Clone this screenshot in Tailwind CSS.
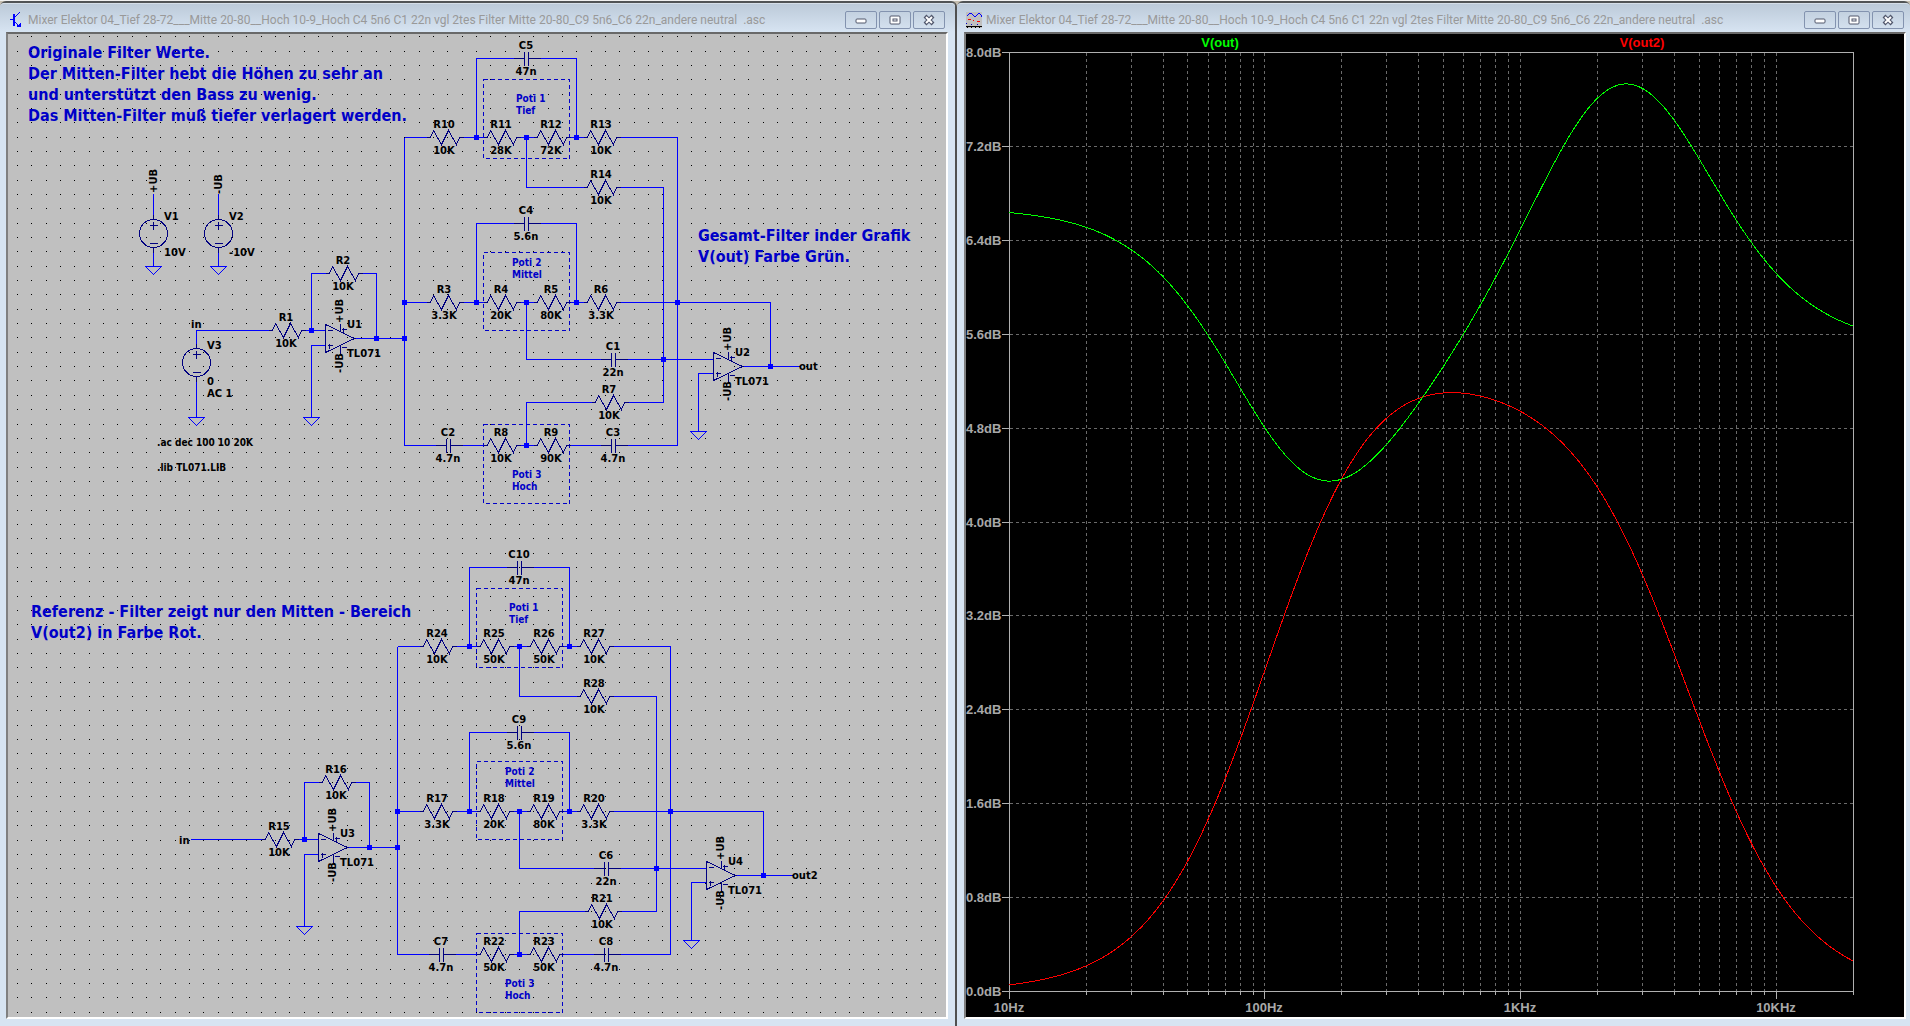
<!DOCTYPE html>
<html lang="de">
<head>
<meta charset="utf-8">
<title>Mixer Elektor 04</title>
<script src="https://cdn.jsdelivr.net/npm/@tailwindcss/browser@4"></script>
</head>
<body class="h-screen overflow-hidden bg-[#f0f0f0] pt-px">
<svg class="hidden">
  <defs>
    <g id="btn-min"><rect x="10" y="7" width="10" height="4" rx="1" fill="#fff" stroke="#50566b"/></g>
    <g id="btn-max"><rect x="10" y="4" width="10" height="8" rx="1" fill="#fff" stroke="#50566b"/><rect x="13" y="7" width="4" height="2" fill="#fff" stroke="#50566b"/></g>
    <g id="btn-close"><path d="M11 4l8 8M19 4l-8 8" stroke="#50566b" stroke-width="4"/><path d="M12 5l6 6M18 5l-6 6" stroke="#fff" stroke-width="2"/></g>
  </defs>
</svg>
<main class="grid h-full grid-cols-[957fr_953fr] bg-[#c5beb0]">

  <section class="flex min-w-0 flex-col rounded-t-md border-t-2 border-r-2 border-t-[#505355] border-r-[#505050] bg-[#d7e4f2] pr-[7px] pb-[7px] pl-[6px]">
    <header class="-mr-[7px] -ml-[6px] flex h-[29px] shrink-0 items-center rounded-t-sm border-t border-[#d5dee8] bg-linear-to-b from-[#bccad9] to-[#d7e4f2] pt-[3px] pr-[10px] pl-2">
      <svg class="size-4 shrink-0" viewBox="0 0 16 16" fill="none" stroke="#0000ff" shape-rendering="crispEdges"><path d="M2 7.500h4M11.500 0.500L6.500 5.500M6.500 9.500l5 5.500"/><path d="M6 2v12" stroke-width="2"/><path d="M8 15h5v-4z" fill="#0000ff" stroke="none"/></svg>
      <h1 class="ml-1 min-w-0 flex-1 truncate pt-px font-['Roboto',sans-serif] text-[12px] leading-4 whitespace-pre text-[#999999]">Mixer Elektor 04_Tief 28-72___Mitte 20-80__Hoch 10-9_Hoch C4 5n6 C1 22n vgl 2tes Filter Mitte 20-80_C9 5n6_C6 22n_andere neutral  .asc</h1>
      <div class="flex gap-[2px]">
        <button aria-label="Minimieren" class="h-[18px] w-8 rounded-[2px] border border-[#8393af] bg-linear-to-b from-[#c3d1e0] to-[#d3e0ee]"><svg class="block h-4 w-[30px]" viewBox="0 0 30 16"><use href="#btn-min"/></svg></button>
        <button aria-label="Maximieren" class="h-[18px] w-8 rounded-[2px] border border-[#8393af] bg-linear-to-b from-[#c3d1e0] to-[#d3e0ee]"><svg class="block h-4 w-[30px]" viewBox="0 0 30 16"><use href="#btn-max"/></svg></button>
        <button aria-label="Schließen" class="h-[18px] w-8 rounded-[2px] border border-[#8393af] bg-linear-to-b from-[#c3d1e0] to-[#d3e0ee]"><svg class="block h-4 w-[30px]" viewBox="0 0 30 16"><use href="#btn-close"/></svg></button>
      </div>
    </header>
    <div class="min-h-0 flex-1 border-2 border-t-[#696969] border-r-white border-b-white border-l-[#808080] bg-[#c0c0c0]">
      <svg id="schematic" class="block h-full w-full font-['DejaVu_Sans',sans-serif] text-[10px] font-bold" viewBox="8 34 938 983" preserveAspectRatio="xMinYMin" role="img" aria-label="Schaltplan">
        <path id="dots" stroke="#000" fill="none" shape-rendering="crispEdges"/>
        <g class="font-['DejaVu_Sans_Condensed','DejaVu_Sans',sans-serif] text-[16px]" fill="#0000c8">
          <text x="28" y="58">Originale Filter Werte.</text>
          <text x="28" y="79">Der Mitten-Filter hebt die Höhen zu sehr an</text>
          <text x="28" y="100">und unterstützt den Bass zu wenig.</text>
          <text x="28" y="121">Das Mitten-Filter muß tiefer verlagert werden.</text>
          <text x="698" y="241">Gesamt-Filter inder Grafik</text>
          <text x="698" y="262">V(out) Farbe Grün.</text>
          <text x="31" y="617">Referenz - Filter zeigt nur den Mitten - Bereich</text>
          <text x="31" y="638">V(out2) in Farbe Rot.</text>
        </g>
        <g class="font-['DejaVu_Sans_Condensed','DejaVu_Sans',sans-serif]" fill="#000">
          <text x="157" y="446">.ac dec 100 10 20K</text>
          <text x="157" y="471">.lib TL071.LIB</text>
        </g>
        <g id="sources"></g>
        <g id="filterA"></g>
        <g id="filterB" transform="translate(-7 509)"></g>
      </svg>
    </div>
  </section>

  <section class="flex min-w-0 flex-col rounded-t-md border-t-2 border-t-[#505355] bg-[#d7e4f2] pr-1 pb-[7px] pl-[7px]">
    <header class="-mr-1 -ml-[7px] flex h-[29px] shrink-0 items-center rounded-t-sm border-t border-[#d5dee8] bg-linear-to-b from-[#bccad9] to-[#d7e4f2] pt-[3px] pr-[6px] pl-[9px]">
      <svg class="size-4 shrink-0" viewBox="0 0 16 16" fill="none" shape-rendering="crispEdges"><path d="M0 0h16v16H0z" fill="#c0c0c0"/><path d="M0.500 4.500L3.500 1.500h2L9 5l3.500-3.500h1L16 4.500" stroke="#0000ff"/><path d="M2 7.500h3M7 8.500h1M11 9.500h3" stroke="#ff0000"/><path d="M5 12.500h1M11 12.500h1M0 11.500h1" stroke="#0000c8"/><path d="M0 14.500h16M1 15.500h1M5 15.500h1M9 15.500h1M13 15.500h1" stroke="#000"/></svg>
      <h1 class="ml-1 min-w-0 flex-1 truncate pt-px font-['Roboto',sans-serif] text-[12px] leading-4 whitespace-pre text-[#999999]">Mixer Elektor 04_Tief 28-72___Mitte 20-80__Hoch 10-9_Hoch C4 5n6 C1 22n vgl 2tes Filter Mitte 20-80_C9 5n6_C6 22n_andere neutral  .asc</h1>
      <div class="flex gap-[2px]">
        <button aria-label="Minimieren" class="h-[18px] w-8 rounded-[2px] border border-[#8393af] bg-linear-to-b from-[#c3d1e0] to-[#d3e0ee]"><svg class="block h-4 w-[30px]" viewBox="0 0 30 16"><use href="#btn-min"/></svg></button>
        <button aria-label="Maximieren" class="h-[18px] w-8 rounded-[2px] border border-[#8393af] bg-linear-to-b from-[#c3d1e0] to-[#d3e0ee]"><svg class="block h-4 w-[30px]" viewBox="0 0 30 16"><use href="#btn-max"/></svg></button>
        <button aria-label="Schließen" class="h-[18px] w-8 rounded-[2px] border border-[#8393af] bg-linear-to-b from-[#c3d1e0] to-[#d3e0ee]"><svg class="block h-4 w-[30px]" viewBox="0 0 30 16"><use href="#btn-close"/></svg></button>
      </div>
    </header>
    <div class="min-h-0 flex-1 border-2 border-t-[#696969] border-r-white border-b-white border-l-[#808080] bg-black">
      <svg id="plot" class="block h-full w-full font-['Liberation_Sans',sans-serif] text-[13px] font-bold" viewBox="966 34 938 983" preserveAspectRatio="xMinYMin" role="img" aria-label="Frequenzgang"></svg>
    </div>
  </section>
</main>

<script>
const $ = id => document.getElementById(id);
const WIRE = '#0000ff', PART = '#000080', NOTE = '#0000c8';

// Editor grid
let dots = '';
for (let r = 0; r < 69; r++)
  for (let c = 0; c < 65; c++)
    dots += `M${Math.floor(17.4 + 14.345 * c)} ${Math.floor(36.7 + 14.345 * r) + 0.5}h1`;
$('dots').setAttribute('d', dots);

// Schematic primitives
const stroke = (d, col = WIRE, extra = '') =>
  `<path d="${d}" transform="translate(.5 .5)" fill="none" stroke="${col}" shape-rendering="crispEdges" ${extra}/>`;
const text = (x, y, s, attr = '') => `<text x="${x}" y="${y}" ${attr}>${s}</text>`;
const mid = 'text-anchor="middle"';
const up = (x, y, s, anchor) => `<text transform="translate(${x} ${y}) rotate(-90)" text-anchor="${anchor}">${s}</text>`;
const res = (x, y, n, v) =>
  stroke(`M${x - 4} ${y}h4l3 -7l8 14l7 -14l8 14l3 -7h4`, PART) + text(x + 14, y - 9, n, mid) + text(x + 14, y + 17, v, mid);
const cap = (x, y, n, v) =>
  stroke(`M${x - 13} ${y}h11M${x - 2} ${y - 7}v14M${x + 2} ${y - 7}v14M${x + 2} ${y}h12`, PART) +
  text(x, y - 9, n, mid) + text(x, y + 17, v, mid);
const gnd = (x, y) => stroke(`M${x - 8} ${y}h16l-8 8z`);
const dot = (x, y) => `<rect x="${x - 2}" y="${y - 2}" width="5" height="5" fill="${WIRE}"/>`;
const source = (x, y, n, v, v2 = '') =>
  stroke(`M${x} ${y - 19}v5M${x} ${y + 14}v5M${x - 14} ${y}a14 14 0 1 0 28 0a14 14 0 1 0 -28 0M${x - 4} ${y - 8}h8M${x} ${y - 12}v8M${x - 4} ${y + 10}h8`, PART) +
  text(x + 11, y - 13, n) + text(x + 11, y + 23, v) + text(x + 11, y + 35, v2);
const opamp = (x, y, n) =>
  stroke(`M${x} ${y - 14}v28l29 -14zM${x + 2} ${y - 8}h5M${x + 2} ${y + 7}h5M${x + 4} ${y + 5}v5M${x + 15} ${y - 15}v8M${x + 15} ${y + 7}v8M${x + 16} ${y - 9}h5M${x + 18} ${y - 11}v5M${x + 16} ${y + 9}h5`, PART) +
  text(x + 22, y - 10, n) + text(x + 22, y + 19, 'TL071') +
  up(x + 18, y - 15, '+UB', 'start') + up(x + 18, y + 15, '-UB', 'end');
const box = (y, h) => stroke(`M483 ${y}h86v${h}h-86z`, NOTE, 'stroke-dasharray="4 3"');
const note = (x, y, a, b) =>
  `<g class="font-['DejaVu_Sans_Condensed','DejaVu_Sans',sans-serif]" fill="${NOTE}">${text(x, y, a)}${text(x, y + 12, b)}</g>`;

$('sources').innerHTML =
  stroke('M153 193V219M153 247V266M218 193V219M218 247V266M196 348V330H272M196 376V417') +
  gnd(153, 266) + gnd(218, 266) + gnd(196, 417) +
  source(153, 233, 'V1', '10V') + source(218, 233, 'V2', '-10V') + source(196, 362, 'V3', '0', 'AC 1') +
  up(157, 193, '+UB', 'start') + up(222, 194, '-UB', 'start') +
  text(191, 328, 'in') +
  stroke('M190 839H265') + text(179, 844, 'in');

// One Baxandall stage; n holds the part names, p the pot halves of the low and high bands
function stage(n, p, out) {
  return stroke(
      'M301 330H325M311 330V273H329M358 273H376V338M354 338H404M325 345H311V417' +
      'M404 137V445M404 137H430M459 137H487M516 137H537M566 137H587M616 137H677V445' +
      'M476 137V58H524M528 58H576V137M526 137V187H587M616 187H663V402' +
      'M404 302H430M459 302H487M516 302H537M566 302H587M616 302H770V366' +
      'M476 302V223H524M528 223H576V302M526 302V359H611M615 359H713' +
      'M526 445V402H595M624 402H663M404 445H446M450 445H487M516 445H537M566 445H611M615 445H677' +
      'M713 373H698V431M742 366H799') +
    box(79, 79) + box(252, 78) + box(424, 79) +
    note(516, 102, 'Poti 1', 'Tief') + note(512, 266, 'Poti 2', 'Mittel') + note(512, 478, 'Poti 3', 'Hoch') +
    gnd(311, 417) + gnd(698, 431) +
    res(272, 330, n[0], '10K') + res(329, 273, n[1], '10K') +
    res(430, 137, n[2], '10K') + res(487, 137, n[3], p[0]) + res(537, 137, n[4], p[1]) + res(587, 137, n[5], '10K') +
    res(587, 187, n[6], '10K') +
    res(430, 302, n[7], '3.3K') + res(487, 302, n[8], '20K') + res(537, 302, n[9], '80K') + res(587, 302, n[10], '3.3K') +
    res(595, 402, n[11], '10K') + res(487, 445, n[12], p[2]) + res(537, 445, n[13], p[3]) +
    cap(526, 58, n[14], '47n') + cap(526, 223, n[15], '5.6n') + cap(613, 359, n[16], '22n') +
    cap(448, 445, n[17], '4.7n') + cap(613, 445, n[18], '4.7n') +
    opamp(325, 338, n[19]) + opamp(713, 366, n[20]) + text(799, 370, out) +
    [[311,330],[376,338],[404,338],[404,302],[476,137],[526,137],[576,137],[476,302],[526,302],[576,302],
     [677,302],[663,359],[526,445],[770,366]].map(q => dot(...q)).join('');
}
$('filterA').innerHTML = stage(
  ['R1','R2','R10','R11','R12','R13','R14','R3','R4','R5','R6','R7','R8','R9','C5','C4','C1','C2','C3','U1','U2'],
  ['28K','72K','10K','90K'], 'out');
$('filterB').innerHTML = stage(
  ['R15','R16','R24','R25','R26','R27','R28','R17','R18','R19','R20','R21','R22','R23','C10','C9','C6','C7','C8','U3','U4'],
  ['50K','50K','50K','50K'], 'out2');

// Small-signal response, complex numbers as [re, im]
const add = (...v) => v.reduce((a, b) => [a[0] + b[0], a[1] + b[1]]);
const mul = (a, b) => [a[0] * b[0] - a[1] * b[1], a[0] * b[1] + a[1] * b[0]];
const neg = a => [-a[0], -a[1]];
const inv = a => { const m = a[0] ** 2 + a[1] ** 2; return [a[0] / m, -a[1] / m]; };
// Current into the summing node for 1 V at the near end of a band
function band(y1, ya, yb, y2, yc, ym) {
  const D = inv(add(ya, yb, ym));
  const P = add(y1, ya, yc, neg(mul(mul(ya, ya), D)));
  const R = add(y2, yb, yc, neg(mul(mul(yb, yb), D)));
  const Q = add(yc, mul(mul(ya, yb), D));
  const k = mul(y1, inv(add(mul(P, R), neg(mul(Q, Q)))));
  return mul(mul(ym, D), add(mul(ya, mul(k, R)), mul(yb, mul(k, Q))));
}
function gain(f, lo, mi, hi) {
  const g = r => [1 / (r * 1e3), 0], c = n => [0, 2 * Math.PI * f * n * 1e-9];
  const side = i => add(
    band(g(10), g(lo[i]), g(lo[1 - i]), g(10), c(47), g(10)),
    band(g(3.3), g(mi[i]), g(mi[1 - i]), g(3.3), c(5.6), c(22)),
    band(c(4.7), g(hi[i]), g(hi[1 - i]), c(4.7), [0, 0], g(10)));
  return 20 * Math.log10(Math.hypot(...side(0)) / Math.hypot(...side(1)));
}

// Plot
const L = 1009, T = 52, R = 1853, B = 991, DEC = (R - L) / Math.log10(2000);
const px = f => L + DEC * Math.log10(f / 10), py = db => B - (B - T) * db / 8;
let grid = '', ticks = `M${L} ${T}H${R}V${B}H${L}z`, labels = '';
for (let i = 0; i <= 10; i++) {
  const y = Math.round(T + (B - T) * i / 10);
  if (i > 0 && i < 10) grid += `M${L} ${y}H${R}`;
  ticks += `M${L - 8} ${y}h8`;
  labels += text(966, y + 5, (8 - 0.8 * i).toFixed(1) + 'dB');
}
for (let d = 10; d <= 10000; d *= 10)
  for (let m = 1; m < 10; m++) {
    const f = d * m;
    if (f > 20000) break;
    const x = Math.floor(px(f) + 0.2);
    if (f > 10 && f < 20000) grid += `M${x} ${T}V${B}`;
    ticks += `M${x} ${B}v${m === 1 ? 7 : 3}`;
    if (m === 1) labels += text(x, 1012, d < 1000 ? d + 'Hz' : d / 1000 + 'KHz', mid);
  }
const trace = (lo, mi, hi) => {
  let d = '';
  for (let i = 0; i <= 330; i++) {
    const f = Math.min(20000, 10 * 10 ** (i / 100));
    d += (i ? 'L' : 'M') + px(f).toFixed(1) + ' ' + py(gain(f, lo, mi, hi)).toFixed(1);
  }
  return d + `L${R} ${py(gain(20000, lo, mi, hi)).toFixed(1)}`;
};
$('plot').innerHTML =
  stroke(grid, '#6a6a6a', 'stroke-dasharray="3 3"') + stroke(ticks, '#b0b0b0') +
  stroke(trace([50, 50], [20, 80], [50, 50]), '#ff0000') + stroke(trace([28, 72], [20, 80], [10, 90]), '#00ff00') +
  `<g fill="#a8a8a8">${labels}</g>` +
  text(1220, 47, 'V(out)', mid + ' fill="#00ff00"') + text(1642, 47, 'V(out2)', mid + ' fill="#ff0000"');
</script>
</body>
</html>
